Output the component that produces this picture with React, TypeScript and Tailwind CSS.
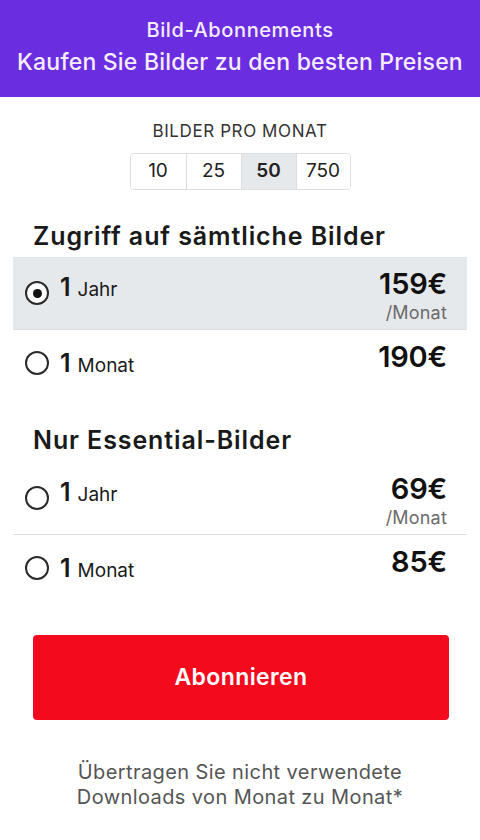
import React, { useState } from "react";

type Plan = { id: string; count: string; unit: string; price: string; perMonth?: boolean };

const allPlans: Plan[] = [
  { id: "all-year", count: "1", unit: "Jahr", price: "159€", perMonth: true },
  { id: "all-month", count: "1", unit: "Monat", price: "190€" },
];

const essentialPlans: Plan[] = [
  { id: "ess-year", count: "1", unit: "Jahr", price: "69€", perMonth: true },
  { id: "ess-month", count: "1", unit: "Monat", price: "85€" },
];

function Radio({ checked }: { checked: boolean }) {
  return (
    <span className="flex h-[24px] w-[24px] shrink-0 items-center justify-center rounded-full border-2 border-[#2a2a2a] bg-white">
      {checked && <span className="h-[9px] w-[9px] rounded-full bg-[#111]" />}
    </span>
  );
}

function PlanRow({
  plan,
  selected,
  onSelect,
  last,
}: {
  plan: Plan;
  selected: boolean;
  onSelect: () => void;
  last?: boolean;
}) {
  return (
    <button
      onClick={onSelect}
      className={`flex w-full items-stretch justify-between pl-[12px] pr-[20px] text-left ${
        selected ? "bg-[#e6e9eb]" : ""
      } ${last ? "" : "border-b border-[#dcdfe2]"} ${plan.perMonth ? "h-[73px]" : "h-[66px]"}`}
    >
      <div className="flex items-center gap-[11px]">
        <Radio checked={selected} />
        <span
          className={`flex items-baseline gap-[7px] text-[#1a1a1a] ${
            plan.perMonth ? "mb-[10px]" : "mt-[2px]"
          }`}
        >
          <span className="text-[25px] font-semibold leading-[26px]">{plan.count}</span>
          <span className="text-[19px] leading-[26px]">{plan.unit}</span>
        </span>
      </div>
      <div className="flex flex-col items-end pt-[10px]">
        <span className="text-[29px] font-semibold leading-[34px] tracking-[-0.2px] text-[#111]">
          {plan.price}
        </span>
        {plan.perMonth && (
          <span className="mt-[1px] text-[18px] leading-[22px] tracking-[0.2px] text-[#6b6b6b]">/Monat</span>
        )}
      </div>
    </button>
  );
}

export default function App() {
  const [count, setCount] = useState("50");
  const [plan, setPlan] = useState("all-year");

  return (
    <div
      className="min-h-[840px] w-[480px] bg-white"
      style={{ fontFamily: 'Inter, "Liberation Sans", sans-serif' }}
    >
      <header className="flex h-[97px] flex-col items-center justify-center bg-[#6a2ee0] pb-[4px] text-[#f6ecff]">
        <h1 className="text-[20px] font-medium leading-[30px] tracking-[0.6px]">Bild-Abonnements</h1>
        <p className="text-[23px] font-medium leading-[34px] tracking-[0.2px]">
          Kaufen Sie Bilder zu den besten Preisen
        </p>
      </header>

      <div className="mt-[23px] flex flex-col items-center">
        <div className="text-[17px] leading-[22px] tracking-[0.6px] text-[#333]">BILDER PRO MONAT</div>
        <div className="mt-[11px] flex h-[37px] overflow-hidden rounded-[4px] border border-[#dcdfe2]">
          {["10", "25", "50", "750"].map((c, i) => (
            <button
              key={c}
              onClick={() => setCount(c)}
              className={`flex items-center justify-center text-[19px] text-[#222] ${
                i === 3 ? "w-[54px]" : "w-[55px]"
              } ${i > 0 ? "border-l border-[#dcdfe2]" : ""} ${
                count === c ? "bg-[#e6e9eb] font-semibold" : "bg-white"
              }`}
            >
              {c}
            </button>
          ))}
        </div>
      </div>

      <section className="mt-[29px] px-[13px]">
        <h2 className="px-[20px] text-[25px] font-semibold leading-[34px] tracking-[0.9px] text-[#1a1a1a]">
          Zugriff auf sämtliche Bilder
        </h2>
        <div className="mt-[4px]">
          {allPlans.map((p, i) => (
            <PlanRow
              key={p.id}
              plan={p}
              selected={plan === p.id}
              onSelect={() => setPlan(p.id)}
              last={i === allPlans.length - 1}
            />
          ))}
        </div>
      </section>

      <section className="mt-[27px] px-[13px]">
        <h2 className="px-[20px] text-[25px] font-semibold leading-[34px] tracking-[0.9px] text-[#1a1a1a]">
          Nur Essential-Bilder
        </h2>
        <div className="mt-[5px]">
          {essentialPlans.map((p, i) => (
            <PlanRow
              key={p.id}
              plan={p}
              selected={plan === p.id}
              onSelect={() => setPlan(p.id)}
              last={i === essentialPlans.length - 1}
            />
          ))}
        </div>
      </section>

      <div className="ml-[33px] mr-[31px] mt-[34px]">
        <button className="flex h-[85px] w-full items-center justify-center rounded-[4px] bg-[#f30b1d] text-[23px] font-semibold tracking-[0.4px] text-white">
          Abonnieren
        </button>
      </div>

      <p className="mt-[40px] text-center text-[20px] leading-[25px] tracking-[0.4px] text-[#555]">
        Übertragen Sie nicht verwendete
        <br />
        Downloads von Monat zu Monat*
      </p>
    </div>
  );
}
